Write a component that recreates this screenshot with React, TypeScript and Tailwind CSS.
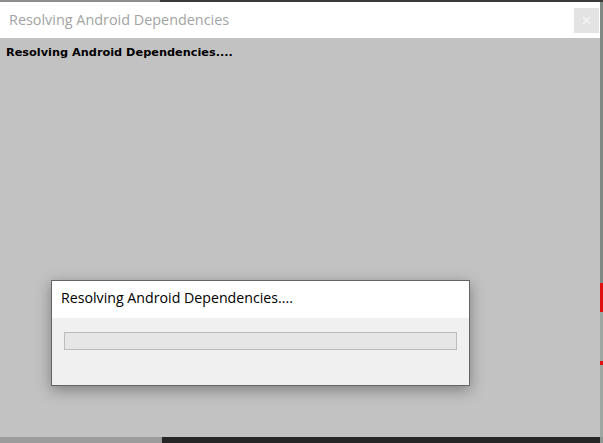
import React from 'react';

const ui = { fontFamily: '"Open Sans", "Noto Sans", sans-serif' };
const imgui = { fontFamily: '"DejaVu Sans", "Liberation Sans", sans-serif' };

const ProgressDialog: React.FC<{ message: string }> = ({ message }) => (
  <div className="absolute left-[51px] top-[242px] w-[419px] border border-[#646464] bg-[#f0f0f0] shadow-[0_4px_14px_rgba(0,0,0,0.35)]">
    <div className="h-[37px] bg-white pl-[9px] pt-[7px] text-[14.2px] leading-[20px] text-black" style={ui}>
      {message}
    </div>
    <div className="h-[67px] px-[12px] pt-[14px]">
      <div className="h-[18px] border border-[#bcbcbc] bg-[#e6e6e6]" />
    </div>
  </div>
);

export default function App() {
  return (
    <div className="flex h-[443px] w-[603px] flex-col overflow-hidden bg-[#2a2a2a]">
      <div className="flex h-[2px]">
        <div className="w-[160px] bg-[#8e8e8e]" />
        <div className="flex-1 bg-[#3a3a3a]" />
      </div>
      <div className="flex h-[435px]">
        {/* editor window */}
        <div className="flex w-[600px] flex-col">
          <div className="flex h-[36px] items-center justify-between bg-white">
            <span className="pl-[9px] text-[14.4px] text-[#a3a3a3]" style={ui}>
              Resolving Android Dependencies
            </span>
            <button className="mr-[1px] flex h-[25px] w-[25px] items-center justify-center bg-[#e3e3e3] text-[#f5f5f5]">
              <svg width="9" height="9" viewBox="0 0 9 9" fill="none" stroke="currentColor" strokeWidth="1.3">
                <path d="M1 1L8 8M8 1L1 8" />
              </svg>
            </button>
          </div>
          <div className="relative flex-1 bg-[#c2c2c2]">
            <div className="pl-[6px] pt-[8px] text-[11.3px] font-bold leading-[13px] text-black" style={imgui}>
              Resolving Android Dependencies....
            </div>
            <ProgressDialog message="Resolving Android Dependencies...." />
          </div>
        </div>
        {/* background peeking through at the right */}
        <div className="flex w-[3px] flex-col bg-[#9ea8a2]">
          <div className="h-[281px] bg-[#7f8a85]" />
          <div className="h-[29px] bg-[#e01010]" />
          <div className="h-[49px]" />
          <div className="h-[4px] bg-[#e01010]" />
          <div className="flex-1" />
        </div>
      </div>
      <div className="flex h-[6px]">
        <div className="w-[162px] bg-[#9c9c9c]" />
        <div className="w-[438px] bg-[#262626]" />
        <div className="flex-1 bg-[#8f9994]" />
      </div>
    </div>
  );
}
